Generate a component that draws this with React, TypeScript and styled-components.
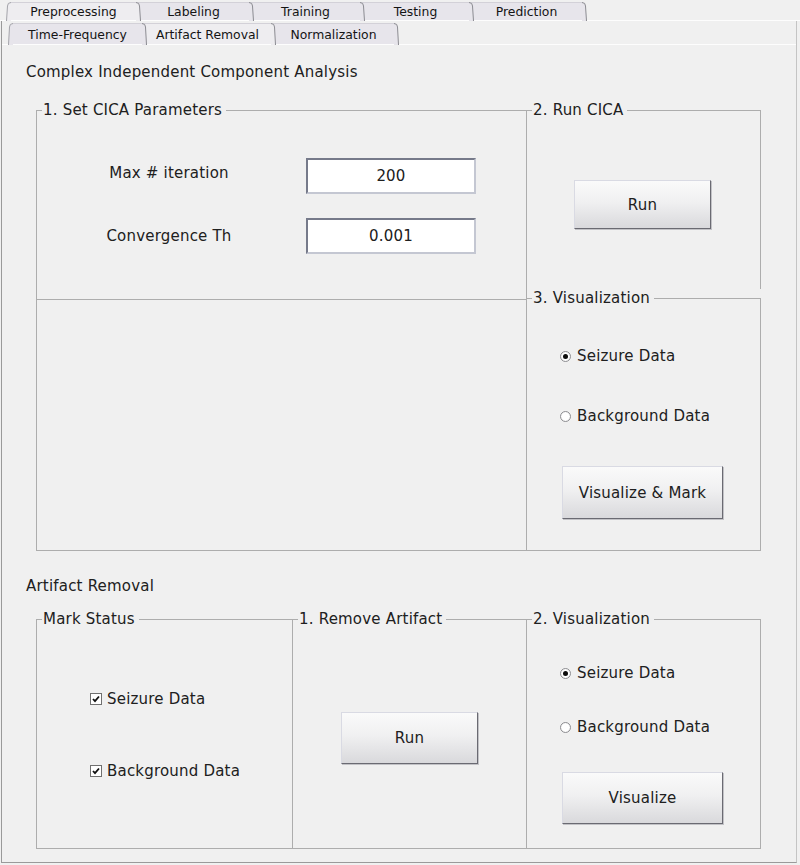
import React from "react";
import styled, { createGlobalStyle } from "styled-components";

const GlobalStyle = createGlobalStyle`
  html, body { margin: 0; padding: 0; background: #f0f0f0; }
  body { font-family: "DejaVu Sans", "Liberation Sans", sans-serif; color: #202020; }
`;

const Frame = styled.div`
  width: 800px;
  height: 865px;
  display: flex;
  flex-direction: column;
  background: #f0f0f0;
  overflow: hidden;
`;

const TabBar = styled.div<{ $h: number; $pl: number }>`
  height: ${(p) => p.$h}px;
  box-sizing: border-box;
  padding: 2px 0 0 ${(p) => p.$pl}px;
  border-bottom: 1px solid #fdfdfd;
  display: flex;
  flex-shrink: 0;
`;

const Tab = styled.div<{ $w: number; $active?: boolean }>`
  position: relative;
  width: ${(p) => p.$w}px;
  height: 100%;
  box-sizing: border-box;
  border-top: 1px solid #d3d1d8;
  background: ${(p) => (p.$active ? "#eeedf0" : "#e7e5eb")};
  display: flex;
  align-items: center;
  justify-content: center;
  font-size: 12.4px;
  color: #141414;
`;

const EdgeSvg = styled.svg<{ $side: "l" | "r" }>`
  position: absolute;
  top: -1px;
  ${(p) => (p.$side === "r" ? "right: -5px;" : "left: -5px;")}
  overflow: visible;
  z-index: 1;
`;

const TabEdge: React.FC<{ h: number; side: "l" | "r"; fill: string }> = ({ h, side, fill }) =>
  side === "r" ? (
    <EdgeSvg $side="r" width={6} height={h + 1}>
      <path d={`M0 0.5 Q3.5 0.5 3.5 4 L4.5 ${h + 1} L0 ${h + 1} Z`} fill={fill} />
      <path d={`M0 0.5 Q3.5 0.5 3.5 4 L4.5 ${h + 1}`} fill="none" stroke="#8c8c92" strokeWidth={1} />
    </EdgeSvg>
  ) : (
    <EdgeSvg $side="l" width={6} height={h + 1}>
      <path d={`M6 0.5 Q2.5 0.5 2.5 4 L1.5 ${h + 1} L6 ${h + 1} Z`} fill={fill} />
      <path d={`M6 0.5 Q2.5 0.5 2.5 4 L1.5 ${h + 1}`} fill="none" stroke="#a4a4aa" strokeWidth={1} />
    </EdgeSvg>
  );

const Body = styled.div`
  margin-left: 1px;
  width: 796px;
  height: 842px;
  box-sizing: border-box;
  border-left: 1px solid #9a9a9a;
  border-right: 1px solid #c4c4c4;
  border-bottom: 1px solid #9a9a9a;
  display: flex;
  flex-direction: column;
`;

const Content = styled.div`
  padding: 18px 0 0 24px;
  display: flex;
  flex-direction: column;
`;

const SectionTitle = styled.div<{ $mt: number }>`
  margin-top: ${(p) => p.$mt}px;
  font-size: 15px;
  line-height: 18px;
  height: 18px;
  letter-spacing: 0.2px;
`;

const Row = styled.div<{ $mt: number }>`
  margin-top: ${(p) => p.$mt}px;
  margin-left: 10px;
  display: flex;
  align-items: flex-start;
`;

const Column = styled.div<{ $w: number; $overlap?: boolean }>`
  width: ${(p) => p.$w}px;
  margin-left: ${(p) => (p.$overlap ? -1 : 0)}px;
  display: flex;
  flex-direction: column;
`;

const Panel = styled.div<{ $w?: number; $h: number; $mt?: number; $ml?: number; $open?: boolean }>`
  position: relative;
  box-sizing: border-box;
  width: ${(p) => (p.$w ? `${p.$w}px` : "100%")};
  height: ${(p) => p.$h}px;
  margin-top: ${(p) => p.$mt ?? 0}px;
  margin-left: ${(p) => p.$ml ?? 0}px;
  border: 1px solid #adadad;
  ${(p) => (p.$open ? "border-bottom: none;" : "")}
  display: flex;
  flex-direction: column;
`;

const Legend = styled.div`
  position: absolute;
  top: -10px;
  left: 5px;
  padding: 0 4px 0 1px;
  background: #f0f0f0;
  font-size: 15px;
  line-height: 18px;
  letter-spacing: 0.2px;
  white-space: nowrap;
`;

const ParamGrid = styled.div`
  margin-top: 47px;
  display: grid;
  grid-template-columns: 264px 170px;
  grid-auto-rows: 35px;
  column-gap: 5px;
  row-gap: 25px;
  align-items: center;
`;

const ParamLabel = styled.div<{ $lift: number }>`
  text-align: center;
  font-size: 15px;
  letter-spacing: 0.2px;
  padding-bottom: ${(p) => p.$lift}px;
`;

const Edit = styled.input`
  box-sizing: border-box;
  width: 170px;
  height: 36px;
  margin: 0;
  padding: 0;
  background: #ffffff;
  border: 2px solid;
  border-color: #767a8a #c4c7d2 #c4c7d2 #767a8a;
  text-align: center;
  font-family: "DejaVu Sans", "Liberation Sans", sans-serif;
  font-size: 15px;
  letter-spacing: 0.2px;
  color: #202020;
  outline: none;
`;

const Button = styled.button<{ $w: number; $h: number; $mt: number; $ml: number }>`
  box-sizing: border-box;
  width: ${(p) => p.$w}px;
  height: ${(p) => p.$h}px;
  margin: ${(p) => p.$mt}px 0 0 ${(p) => p.$ml}px;
  padding: 0;
  flex-shrink: 0;
  border: 1px solid;
  border-color: #d9dae3 #6a6a72 #6a6a72 #d9dae3;
  box-shadow: 1px 1px 0 #c2c2c6;
  background: linear-gradient(#fafafa 0%, #f0f0f1 45%, #d9d9dc 100%);
  font-family: "DejaVu Sans", "Liberation Sans", sans-serif;
  font-size: 15px;
  letter-spacing: 0.2px;
  color: #202020;
`;

const OptionList = styled.div<{ $mt: number; $gap: number; $pl: number }>`
  margin-top: ${(p) => p.$mt}px;
  padding-left: ${(p) => p.$pl}px;
  display: flex;
  flex-direction: column;
  gap: ${(p) => p.$gap}px;
`;

const Option = styled.div<{ $gap: number }>`
  height: 18px;
  display: flex;
  align-items: center;
  gap: ${(p) => p.$gap}px;
  font-size: 15px;
  letter-spacing: 0.2px;
`;

const RadioDot = styled.span<{ $on?: boolean }>`
  position: relative;
  width: 11px;
  height: 11px;
  box-sizing: border-box;
  border-radius: 50%;
  border: 1px solid #8e8e92;
  background: radial-gradient(circle, #ffffff 50%, #ececec 100%);
  flex-shrink: 0;
  &::after {
    content: "";
    display: ${(p) => (p.$on ? "block" : "none")};
    position: absolute;
    left: 2px;
    top: 2px;
    width: 5px;
    height: 5px;
    border-radius: 50%;
    background: #0c0c0c;
  }
`;

const CheckBox = styled.span`
  width: 12px;
  height: 12px;
  box-sizing: border-box;
  border: 1px solid #707070;
  background: #ffffff;
  display: flex;
  align-items: center;
  justify-content: center;
  flex-shrink: 0;
`;

const Check = () => (
  <svg width="8" height="8" viewBox="0 0 8 8">
    <path d="M1 4 L3 6.2 L7 1.5" fill="none" stroke="#111" strokeWidth="1.8" />
  </svg>
);

const outerTabs = [
  { label: "Preprocessing", w: 127, active: true },
  { label: "Labeling", w: 113 },
  { label: "Training", w: 111 },
  { label: "Testing", w: 109 },
  { label: "Prediction", w: 113 },
];

const innerTabs = [
  { label: "Time-Frequency", w: 131 },
  { label: "Artifact Removal", w: 129, active: true },
  { label: "Normalization", w: 123 },
];

const Tabs: React.FC<{ items: { label: string; w: number; active?: boolean }[]; h: number }> = ({ items, h }) => (
  <>
    {items.map((t, i) => {
      const fill = t.active ? "#eeedf0" : "#e7e5eb";
      return (
        <Tab key={t.label} $w={t.w} $active={t.active}>
          {i === 0 && <TabEdge h={h} side="l" fill={fill} />}
          {t.label}
          <TabEdge h={h} side="r" fill={fill} />
        </Tab>
      );
    })}
  </>
);

const Radio: React.FC<{ label: string; on?: boolean }> = ({ label, on }) => (
  <Option $gap={6}>
    <RadioDot $on={on} />
    {label}
  </Option>
);

const Checked: React.FC<{ label: string }> = ({ label }) => (
  <Option $gap={5}>
    <CheckBox>
      <Check />
    </CheckBox>
    {label}
  </Option>
);

export default function App() {
  return (
    <>
      <GlobalStyle />
      <Frame>
        <TabBar $h={21} $pl={10}>
          <Tabs items={outerTabs} h={18} />
        </TabBar>
        <Body>
          <TabBar $h={24} $pl={10}>
            <Tabs items={innerTabs} h={21} />
          </TabBar>
          <Content>
            <SectionTitle $mt={0}>Complex Independent Component Analysis</SectionTitle>
            <Row $mt={29}>
              <Column $w={491}>
                <Panel $h={190}>
                  <Legend>1. Set CICA Parameters</Legend>
                  <ParamGrid>
                    <ParamLabel $lift={5}>Max # iteration</ParamLabel>
                    <Edit readOnly value="200" />
                    <ParamLabel $lift={0}>Convergence Th</ParamLabel>
                    <Edit readOnly value="0.001" />
                  </ParamGrid>
                </Panel>
                <Panel $h={252} $mt={-1} />
              </Column>
              <Column $w={235} $overlap>
                <Panel $h={179} $open>
                  <Legend>2. Run CICA</Legend>
                  <Button $w={137} $h={49} $mt={69} $ml={47}>Run</Button>
                </Panel>
                <Panel $h={253} $mt={9}>
                  <Legend>3. Visualization</Legend>
                  <OptionList $mt={48} $gap={42} $pl={33}>
                    <Radio label="Seizure Data" on />
                    <Radio label="Background Data" />
                  </OptionList>
                  <Button $w={161} $h={53} $mt={41} $ml={35}>Visualize &amp; Mark</Button>
                </Panel>
              </Column>
            </Row>
            <SectionTitle $mt={26}>Artifact Removal</SectionTitle>
            <Row $mt={24}>
              <Panel $w={257} $h={230}>
                <Legend>Mark Status</Legend>
                <OptionList $mt={70} $gap={54} $pl={53}>
                  <Checked label="Seizure Data" />
                  <Checked label="Background Data" />
                </OptionList>
              </Panel>
              <Panel $w={235} $h={230} $ml={-1}>
                <Legend>1. Remove Artifact</Legend>
                <Button $w={137} $h={52} $mt={92} $ml={48}>Run</Button>
              </Panel>
              <Panel $w={235} $h={230} $ml={-1}>
                <Legend>2. Visualization</Legend>
                <OptionList $mt={44} $gap={36} $pl={33}>
                  <Radio label="Seizure Data" on />
                  <Radio label="Background Data" />
                </OptionList>
                <Button $w={161} $h={52} $mt={36} $ml={35}>Visualize</Button>
              </Panel>
            </Row>
          </Content>
        </Body>
      </Frame>
    </>
  );
}
